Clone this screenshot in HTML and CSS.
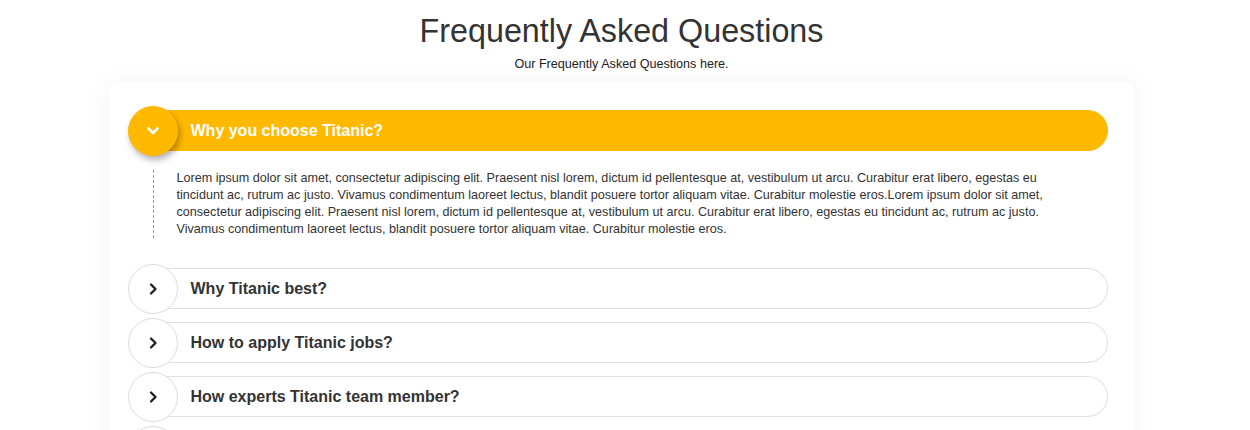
FILE: index.html
```html
<!DOCTYPE html>
<html lang="en">
<head>
    <meta charset="UTF-8">
    <meta name="viewport" content="width=device-width, initial-scale=1.0">
    <title>FAQ - Titanic</title>
    <link rel="stylesheet" href="styles.css">
</head>
<body>
    <div class="faq-head">
        <h1>Frequently Asked Questions</h1>
        <p>Our Frequently Asked Questions here.</p>
    </div>

    <div class="faq-card">
        <div class="faq-item open">
            <div class="faq-question">
                <span class="faq-icon">
                    <svg width="14" height="14" viewBox="0 0 14 14"><polyline points="2.5,4.5 7,9 11.5,4.5" fill="none" stroke="#fff" stroke-width="2.6" stroke-linecap="round" stroke-linejoin="round"/></svg>
                </span>
                <span class="faq-title">Why you choose Titanic?</span>
            </div>
            <div class="faq-answer">
                <p>Lorem ipsum dolor sit amet, consectetur adipiscing elit. Praesent nisl lorem, dictum id pellentesque at, vestibulum ut arcu. Curabitur erat libero, egestas eu tincidunt ac, rutrum ac justo. Vivamus condimentum laoreet lectus, blandit posuere tortor aliquam vitae. Curabitur molestie eros.Lorem ipsum dolor sit amet, consectetur adipiscing elit. Praesent nisl lorem, dictum id pellentesque at, vestibulum ut arcu. Curabitur erat libero, egestas eu tincidunt ac, rutrum ac justo. Vivamus condimentum laoreet lectus, blandit posuere tortor aliquam vitae. Curabitur molestie eros.</p>
            </div>
        </div>
        <div class="faq-item">
            <div class="faq-question">
                <span class="faq-icon">
                    <svg width="14" height="14" viewBox="0 0 14 14"><polyline points="5,2.5 9.5,7 5,11.5" fill="none" stroke="#222" stroke-width="2.4" stroke-linecap="round" stroke-linejoin="round"/></svg>
                </span>
                <span class="faq-title">Why Titanic best?</span>
            </div>
        </div>
        <div class="faq-item">
            <div class="faq-question">
                <span class="faq-icon">
                    <svg width="14" height="14" viewBox="0 0 14 14"><polyline points="5,2.5 9.5,7 5,11.5" fill="none" stroke="#222" stroke-width="2.4" stroke-linecap="round" stroke-linejoin="round"/></svg>
                </span>
                <span class="faq-title">How to apply Titanic jobs?</span>
            </div>
        </div>
        <div class="faq-item">
            <div class="faq-question">
                <span class="faq-icon">
                    <svg width="14" height="14" viewBox="0 0 14 14"><polyline points="5,2.5 9.5,7 5,11.5" fill="none" stroke="#222" stroke-width="2.4" stroke-linecap="round" stroke-linejoin="round"/></svg>
                </span>
                <span class="faq-title">How experts Titanic team member?</span>
            </div>
        </div>
        <div class="faq-item">
            <div class="faq-question">
                <span class="faq-icon">
                    <svg width="14" height="14" viewBox="0 0 14 14"><polyline points="5,2.5 9.5,7 5,11.5" fill="none" stroke="#222" stroke-width="2.4" stroke-linecap="round" stroke-linejoin="round"/></svg>
                </span>
                <span class="faq-title">What is Titanic support?</span>
            </div>
        </div>
    </div>
</body>
</html>
```

FILE: styles.css
```css
body { font-family: 'Liberation Sans', Arial, Helvetica, sans-serif; background-color: #fff; color: #333; margin: 0; padding: 12px 7px 6px 0; }

.faq-head { text-align: center; }
.faq-head h1 { font-size: 32.3px; font-weight: normal; line-height: 38px; margin: 0 0 6px; color: #333; }
.faq-head p { font-size: 12.6px; line-height: 16px; margin: 0; color: #222; }

.faq-card { width: 1026px; margin: 10px auto 0; padding: 24px 27px 10px 19px; box-sizing: border-box; background-color: #fff; border-radius: 10px; box-shadow: 0 0 28px rgba(0,0,0,0.05); }

.faq-item { padding: 4px 0 9px; }
.faq-question { position: relative; display: flex; align-items: center; height: 41px; margin-left: 25px; padding-left: 38px; border: 1px solid #e0e0e0; border-left: none; border-radius: 0 21px 21px 0; box-sizing: border-box; }
.faq-icon { position: absolute; left: -25px; top: -5px; width: 50px; height: 50px; border-radius: 50%; background-color: #fff; border: 1px solid #ddd; box-sizing: border-box; display: flex; align-items: center; justify-content: center; }
.faq-title { font-size: 16px; font-weight: bold; color: #333; }

.faq-item.open { padding-bottom: 26px; }
.faq-item.open .faq-question { background-color: #ffb900; border-color: #ffb900; }
.faq-item.open .faq-icon { background-color: #ffb900; border-color: #ffb900; box-shadow: 2px 4px 6px rgba(0,0,0,0.3); }
.faq-item.open .faq-title { color: #fff; }

.faq-answer { margin: 19px 0 0 25px; padding-left: 23px; border-left: 1px dashed #999; }
.faq-answer p { margin: 0; max-width: 895px; font-size: 12.6px; line-height: 17px; color: #333; }
```
